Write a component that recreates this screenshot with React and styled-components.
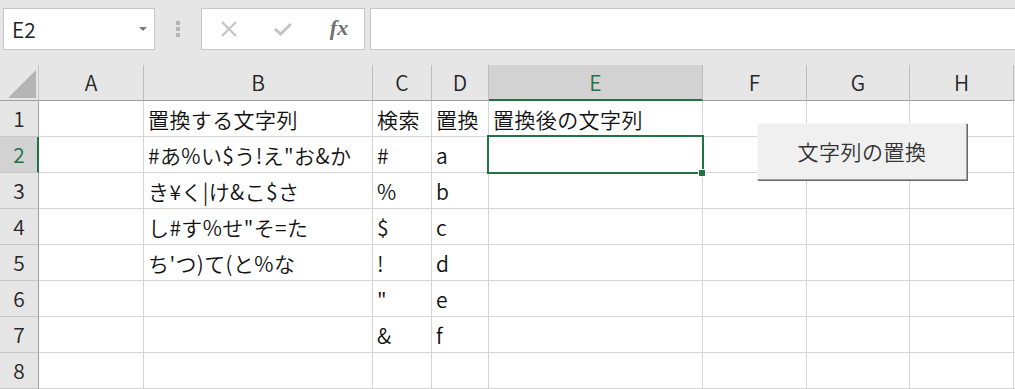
import React from 'react';
import styled, { createGlobalStyle } from 'styled-components';

const GlobalStyle = createGlobalStyle`
  html, body { margin: 0; padding: 0; background: #e6e6e6; }
  body { font-family: "Noto Sans CJK JP", "Noto Sans", sans-serif; overflow: hidden; }
  * { box-sizing: border-box; }
`;

const GREEN = '#217346';

const Page = styled.div`
  width: 1015px;
  height: 389px;
  overflow: hidden;
  background: #e6e6e6;
`;

const FormulaBar = styled.div`
  display: flex;
  align-items: flex-start;
  height: 65px;
  padding: 8px 0 0 3px;
`;

const NameBox = styled.div`
  width: 152px;
  height: 42px;
  background: #fff;
  border: 1px solid #c6c6c6;
  display: flex;
  align-items: center;
  justify-content: space-between;
  padding: 0 7px 0 8px;
  font-size: 21px;
  font-weight: 350;
  line-height: 1;
  color: #222;
`;

const Caret = styled.span`
  width: 0;
  height: 0;
  border-left: 4px solid transparent;
  border-right: 4px solid transparent;
  border-top: 4px solid #7a7a7a;
`;

const Grip = styled.div`
  width: 46px;
  height: 42px;
  display: flex;
  flex-direction: column;
  align-items: center;
  justify-content: center;
  gap: 2px;
`;

const GripDot = styled.span`
  width: 4px;
  height: 4px;
  background: #b4b4b4;
`;

const FxBox = styled.div`
  width: 164px;
  height: 42px;
  background: #fff;
  border: 1px solid #c6c6c6;
  display: grid;
  grid-template-columns: repeat(3, 1fr);
  align-items: center;
  justify-items: center;
`;

const FxText = styled.span`
  font-family: "Liberation Serif", "DejaVu Serif", serif;
  font-style: italic;
  font-weight: bold;
  font-size: 22px;
  line-height: 1;
  color: #707070;
  margin-left: 4px;
  margin-top: -2px;
`;

const FormulaInput = styled.div`
  flex: 1;
  margin-left: 5px;
  height: 42px;
  background: #fff;
  border: 1px solid #c6c6c6;
  border-right: none;
`;

const Sheet = styled.div`
  position: relative;
`;

const Grid = styled.div`
  display: grid;
  grid-template-columns: 39px 105px 229px 59px 57px 214px 104px 103px 104px 1fr;
  grid-auto-rows: 36px;
`;

const Corner = styled.div`
  position: relative;
  background: #e6e6e6;
  border-right: 1px solid #c6c6c6;
  border-bottom: 1px solid #9e9e9e;
`;

const CornerTriangle = styled.div`
  position: absolute;
  right: 2px;
  bottom: 2px;
  width: 28px;
  height: 28px;
  background: #b4b4b4;
  clip-path: polygon(100% 0, 100% 100%, 0 100%);
`;

const ColHeader = styled.div`
  background: ${p => (p.$selected ? '#d2d2d2' : '#e6e6e6')};
  color: ${p => (p.$selected ? GREEN : '#262626')};
  border-right: 1px solid ${p => (p.$last ? 'transparent' : '#bcbcbc')};
  border-bottom: ${p => (p.$selected ? `2px solid ${GREEN}` : '1px solid #9e9e9e')};
  display: flex;
  align-items: center;
  justify-content: center;
  font-size: 21px;
  font-weight: 350;
  line-height: 1;
  padding-top: ${p => (p.$selected ? '1px' : '0')};
`;

const RowHeader = styled.div`
  background: ${p => (p.$selected ? '#d2d2d2' : '#e6e6e6')};
  color: ${p => (p.$selected ? GREEN : '#262626')};
  border-right: ${p => (p.$selected ? `2px solid ${GREEN}` : '1px solid #9e9e9e')};
  border-bottom: 1px solid #c6c6c6;
  display: flex;
  align-items: center;
  justify-content: center;
  font-size: 21px;
  font-weight: 350;
  line-height: 1;
  padding-left: ${p => (p.$selected ? '1px' : '0')};
`;

const Cell = styled.div`
  position: relative;
  background: #fff;
  border-right: 1px solid #d4d4d4;
  border-bottom: 1px solid #d4d4d4;
  display: flex;
  align-items: center;
  padding: 1px 0 0 4px;
  font-size: 21px;
  font-weight: 350;
  letter-spacing: 0.4px;
  line-height: 1;
  color: #111;
  white-space: pre;
  overflow: visible;
  z-index: ${p => (p.$active ? 2 : 'auto')};
`;

const Selection = styled.div`
  position: absolute;
  top: -2px;
  left: -2px;
  right: -2px;
  bottom: -2px;
  border: 2px solid ${GREEN};
  pointer-events: none;
`;

const FillHandle = styled.div`
  position: absolute;
  right: -4px;
  bottom: -5px;
  width: 8px;
  height: 8px;
  background: ${GREEN};
  border: 1px solid #fff;
`;

const MacroButton = styled.button`
  position: absolute;
  left: 757px;
  top: 58px;
  width: 210px;
  height: 57px;
  background: #f0f0f0;
  border-top: 1px solid #f7f7f7;
  border-left: 1px solid #f7f7f7;
  border-right: 1px solid #a0a0a0;
  border-bottom: 1px solid #a0a0a0;
  box-shadow: 1px 1px 0 #696969;
  font-family: "Noto Sans CJK JP", "Noto Sans", sans-serif;
  font-size: 21px;
  font-weight: 350;
  letter-spacing: 0.5px;
  line-height: 1;
  color: #333;
  padding: 0;
  display: flex;
  align-items: center;
  justify-content: center;
  z-index: 3;
`;

const columns = ['A', 'B', 'C', 'D', 'E', 'F', 'G', 'H'];

const rows = [
  ['', '置換する文字列', '検索', '置換', '置換後の文字列', '', '', ''],
  ['', '#あ%い$う!え"お&か', '#', 'a', '', '', '', ''],
  ['', 'き¥く|け&こ$さ', '%', 'b', '', '', '', ''],
  ['', 'し#す%せ"そ=た', '$', 'c', '', '', '', ''],
  ['', "ち'つ)て(と%な", '!', 'd', '', '', '', ''],
  ['', '', '"', 'e', '', '', '', ''],
  ['', '', '&', 'f', '', '', '', ''],
  ['', '', '', '', '', '', '', ''],
];

const CloseIcon = () => (
  <svg width="20" height="16" viewBox="0 0 20 16">
    <path d="M3 1 L17 15 M17 1 L3 15" stroke="#c3c3c3" strokeWidth="2" fill="none" />
  </svg>
);

const CheckIcon = () => (
  <svg width="20" height="14" viewBox="0 0 20 14">
    <path d="M2 7 L7.5 12 L18 2" stroke="#c3c3c3" strokeWidth="3" fill="none" />
  </svg>
);

export default function App() {
  return (
    <Page>
      <GlobalStyle />
      <FormulaBar>
        <NameBox>
          <span>E2</span>
          <Caret />
        </NameBox>
        <Grip>
          <GripDot />
          <GripDot />
          <GripDot />
        </Grip>
        <FxBox>
          <CloseIcon />
          <CheckIcon />
          <FxText>fx</FxText>
        </FxBox>
        <FormulaInput />
      </FormulaBar>
      <Sheet>
        <Grid>
          <Corner>
            <CornerTriangle />
          </Corner>
          {columns.map(c => (
            <ColHeader key={c} $selected={c === 'E'}>
              {c}
            </ColHeader>
          ))}
          <ColHeader $last />
          {rows.map((row, r) => (
            <React.Fragment key={r}>
              <RowHeader $selected={r === 1}>{r + 1}</RowHeader>
              {row.map((val, c) => {
                const active = r === 1 && c === 4;
                return (
                  <Cell key={c} $active={active}>
                    {val}
                    {active && (
                      <Selection>
                        <FillHandle />
                      </Selection>
                    )}
                  </Cell>
                );
              })}
              <Cell />
            </React.Fragment>
          ))}
        </Grid>
        <MacroButton>文字列の置換</MacroButton>
      </Sheet>
    </Page>
  );
}
